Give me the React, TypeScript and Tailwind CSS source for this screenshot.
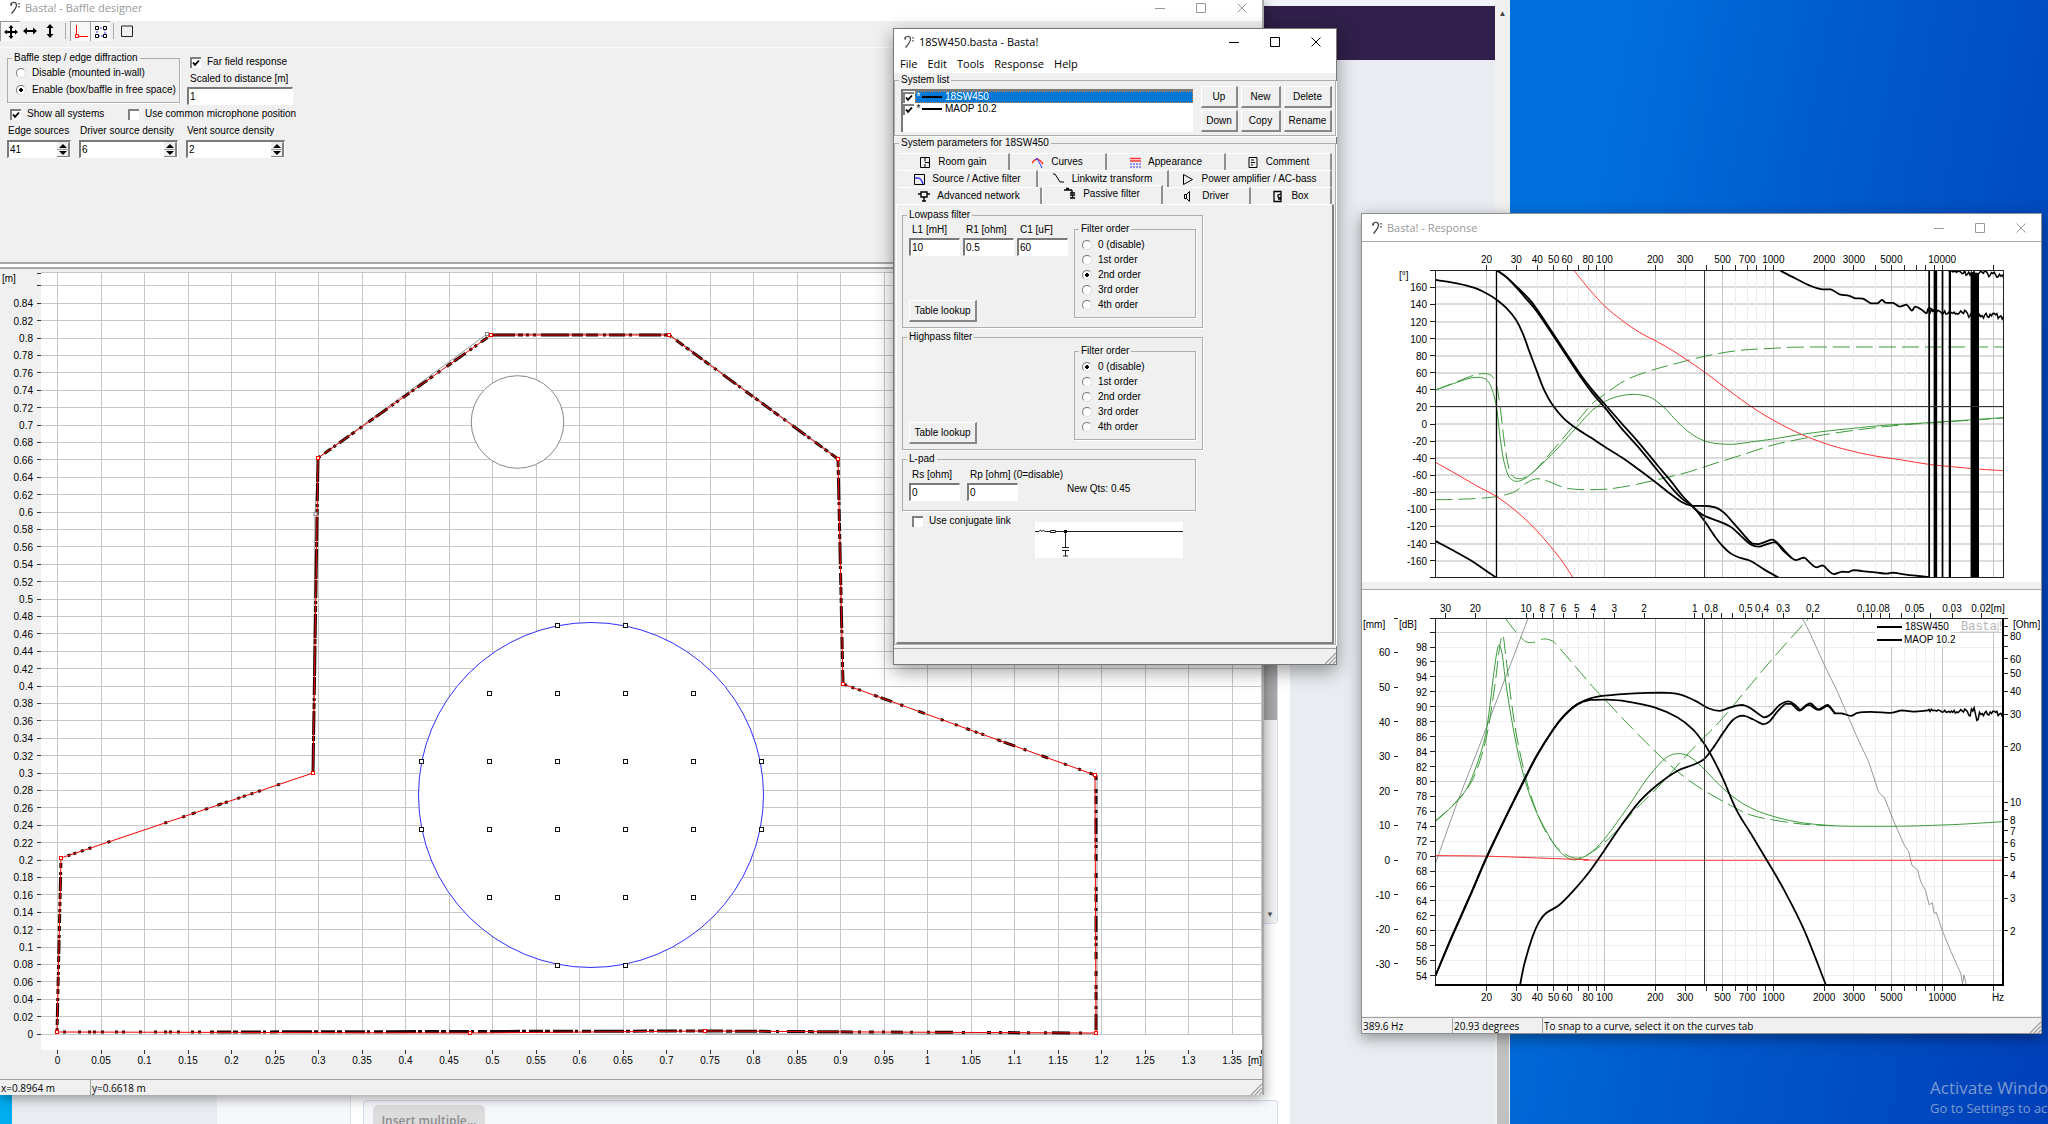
import type { ReactNode } from "react";

type Point = [number, number];

const tiny = "text-[10px] leading-3";

// Catmull-Rom spline through the given points
function curve(flat: number[]) {
  const p: Point[] = [];
  for (let i = 0; i < flat.length; i += 2) p.push([flat[i], flat[i + 1]]);
  let d = `M${p[0][0]} ${p[0][1]}`;
  for (let i = 0; i < p.length - 1; i++) {
    const a = p[i - 1] ?? p[i];
    const b = p[i];
    const c = p[i + 1];
    const e = p[i + 2] ?? c;
    const y = (n: number) => Math.min(Math.max(n, Math.min(b[1], c[1])), Math.max(b[1], c[1]));
    d += `C${b[0] + (c[0] - a[0]) / 6} ${y(b[1] + (c[1] - a[1]) / 6)} ${c[0] - (e[0] - b[0]) / 6} ${y(c[1] - (e[1] - b[1]) / 6)} ${c[0]} ${c[1]}`;
  }
  return d;
}

function noise(x0: number, x1: number, y0: number, y1: number, amp: (x: number) => number) {
  let d = `M${x0} ${y0}`;
  let i = 0;
  for (let x = x0; x <= x1; x += 3) {
    const r = Math.sin(i * 12.9898) * 43758.5453;
    const n = (r - Math.floor(r)) * 2 - 1;
    const t = (x - x0) / (x1 - x0);
    d += `L${x} ${y0 + (y1 - y0) * t + n * amp(x)}`;
    i++;
  }
  return d;
}

function Clef({ className }: { className: string }) {
  return (
    <svg viewBox="0 0 12 14" className={`h-[14px] w-3 shrink-0 ${className}`} fill="none" stroke="currentColor">
      <path d="M1.500 3.500C2.500 .5 7.500 .5 7.500 4C7.500 7.500 4.500 10 2.500 12.500" strokeWidth="1.300" />
      <circle cx="2.200" cy="3.800" r="1" fill="currentColor" stroke="none" />
      <path d="M10 2v1.600M10 5v1.600" strokeWidth="1.400" />
    </svg>
  );
}

function TitleBar({ title, active, className }: { title: string; active?: boolean; className: string }) {
  const tone = active ? "text-black" : "text-[#999]";
  return (
    <header className={`flex items-center bg-white ${className}`}>
      <Clef className={`mr-1 ml-[9px] ${active ? "text-[#555]" : "text-[#444]"}`} />
      <h2 className={`font-['Open_Sans',sans-serif] text-[11px] leading-4 ${tone}`}>{title}</h2>
      <div className={`ml-auto flex ${tone}`}>
        <button type="button" aria-label="Minimize" className="grid w-[41px] place-items-center">
          <svg viewBox="0 0 10 10" className="size-[10px]" stroke="currentColor"><path d="M0 5.500h10" /></svg>
        </button>
        <button type="button" aria-label="Maximize" className="grid w-[41px] place-items-center">
          <svg viewBox="0 0 10 10" className="size-[10px]" stroke="currentColor" fill="none"><path d="M.5.5h9v9h-9z" /></svg>
        </button>
        <button type="button" aria-label="Close" className="grid w-[41px] place-items-center">
          <svg viewBox="0 0 10 10" className="size-[10px]" stroke="currentColor"><path d="M.5.5l9 9M9.500.5l-9 9" /></svg>
        </button>
      </div>
    </header>
  );
}

function Group({ title, className, children }: { title: string; className: string; children?: ReactNode }) {
  return (
    <fieldset className={`min-w-0 border border-[#adadad] shadow-[1px_1px_#fff] ${className}`}>
      <legend className={`ml-1 px-0.5 ${tiny}`}>{title}</legend>
      {children}
    </fieldset>
  );
}

function CheckBox({ checked, label }: { checked?: boolean; label?: string }) {
  return (
    <span className="grid size-[11px] shrink-0 place-items-center">
      <input
        type="checkbox"
        aria-label={label}
        defaultChecked={checked}
        className="peer col-start-1 row-start-1 size-[11px] appearance-none border-t-2 border-l-2 border-[#808080] bg-white"
      />
      <svg viewBox="0 0 8 8" className="pointer-events-none col-start-1 row-start-1 mt-px ml-px hidden size-2 peer-checked:block" fill="none" stroke="#000" strokeWidth="1.800">
        <path d="M1 3.500l2 2.300L7 1.500" />
      </svg>
    </span>
  );
}

function Check({ label, checked, className = "" }: { label: string; checked?: boolean; className?: string }) {
  return (
    <label className={`flex items-center gap-[6px] ${tiny} ${className}`}>
      <CheckBox checked={checked} />
      {label}
    </label>
  );
}

function Radio({ name, label, checked, className }: { name: string; label: string; checked?: boolean; className: string }) {
  return (
    <label className={`flex items-center gap-[6px] ${tiny} ${className}`}>
      <input
        type="radio"
        name={name}
        defaultChecked={checked}
        className="size-[10px] shrink-0 appearance-none rounded-full border border-t-[#777] border-r-[#ddd] border-b-[#ddd] border-l-[#777] bg-white checked:bg-[radial-gradient(circle,#000_0_2px,#fff_2px)]"
      />
      {label}
    </label>
  );
}

function Field({ label, value, className, box }: { label: string; value: string; className: string; box: string }) {
  return (
    <label className={`flex flex-col gap-[2px] whitespace-nowrap ${tiny} ${className}`}>
      <span className="pl-[3px]">{label}</span>
      <input
        defaultValue={value}
        className={`h-[18px] border-t-2 border-r border-b border-l-2 border-t-[#7a7a7a] border-r-white border-b-white border-l-[#7a7a7a] bg-white px-[1px] ${tiny} ${box}`}
      />
    </label>
  );
}

function Spin({ label, value, className }: { label: string; value: string; className: string }) {
  return (
    <div className={`flex flex-col gap-[3px] ${tiny} ${className}`}>
      <label htmlFor={label} className="pl-px whitespace-nowrap">{label}</label>
      <div className="flex h-[18px] border-t-2 border-r border-b border-l-2 border-t-[#7a7a7a] border-r-white border-b-white border-l-[#7a7a7a] bg-white">
        <input id={label} defaultValue={value} className="w-0 grow px-px" />
        <div className="flex w-[13px] flex-col">
          <button type="button" aria-label={`${label} up`} className="grid flex-1 place-items-center border-t border-r-2 border-b border-t-[#e8e8e8] border-r-[#808080] border-b-[#a0a0a0] bg-[#f0f0f0]">
            <svg viewBox="0 0 8 4" className="h-1 w-2"><path d="M0 4L4 0L8 4z" /></svg>
          </button>
          <button type="button" aria-label={`${label} down`} className="grid flex-1 place-items-center border-r-2 border-b border-r-[#808080] border-b-[#808080] bg-[#f0f0f0]">
            <svg viewBox="0 0 8 4" className="h-1 w-2"><path d="M0 0L4 4L8 0z" /></svg>
          </button>
        </div>
      </div>
    </div>
  );
}

function PushButton({ children, className = "" }: { children: ReactNode; className?: string }) {
  return (
    <button
      type="button"
      className={`h-[22px] border-t border-r-2 border-b-2 border-l border-t-white border-r-[#888] border-b-[#888] border-l-white bg-[#f0f0f0] ${tiny} ${className}`}
    >
      {children}
    </button>
  );
}

function Grip() {
  return (
    <svg viewBox="0 0 12 12" className="ml-auto size-3 self-end" stroke="#999" strokeWidth="1.200">
      <path d="M1 12L12 1M5 12l7-7M9 12l3-3" />
    </svg>
  );
}

/* ---------- Baffle designer ---------- */

const bx = (m: number) => 57.5 + m * 870;
const by = (m: number) => 1033 - m * 870;

const edges: { d: string; dash: string }[] = [
  { d: "M57 1031L61 857", dash: "4 3 6 2 14 2 3 4 5 3 9 2 3 3" },
  { d: "M61 857L313 772", dash: "0 7 3 3 3 5 3 5 3 17 3 57 3 16 3 7 4 10 3 10 5 3 3 3" },
  { d: "M313 772L318 457", dash: "30 2 5 1 24 2 6 2 3 3 18 1" },
  { d: "M318 457L491 334", dash: "3 5 8 3 3 4 12 3 4 6 3 8 6 3 14 5 3 3" },
  { d: "M491 334H579", dash: "24 3 5 3 3 4 3 5 28 3" },
  { d: "M579 334H669", dash: "4 3 12 5 3 3 16 4 3 7 22 3" },
  { d: "M669 334L838 458", dash: "3 6 9 3 4 4 12 3 6 6 3 8 16 3" },
  { d: "M838 458L843 683", dash: "8 3 5 3 22 2 3 4 12 2" },
  { d: "M843 683L1095 774", dash: "4 5 3 4 3 14 4 3 12 9 3 16 7 17 3 12 3 9" },
  { d: "M1096 774V1032", dash: "5 9 4 3 8 6 3 5 16 4 4 3 3 6 7 12" },
  { d: "M57 1031L210 1031", dash: "0 6 3 12 3 7 3 2 3 5 3 11 3 4 3 8" },
  { d: "M210 1031L705 1030", dash: "4 3 14 2 5 3 20 2 3 4 9 3 30 2" },
  { d: "M705 1030L870 1031", dash: "18 3 6 3 22 2 12 5 3 8" },
  { d: "M870 1031L1096 1032", dash: "4 8 3 6 12 7 3 14 3 5 18 9 3 22" },
];

const corners: Point[] = [
  [57, 1031], [61, 857], [313, 772], [318, 457], [491, 334], [669, 334],
  [838, 458], [843, 683], [1095, 774], [1096, 1032], [705, 1030], [470, 1032],
];

const sources: Point[] = [
  [557, 624], [625, 624], [557, 964], [625, 964], [421, 760], [421, 828], [761, 760], [761, 828],
  ...[489, 557, 625, 693].flatMap((x) => [692, 760, 828, 896].map((y): Point => [x, y])),
];

function BafflePlot() {
  const rows = Array.from({ length: 44 }, (_, i) => i * 0.02);
  const cols = Array.from({ length: 28 }, (_, i) => i * 0.05);
  return (
    <svg viewBox="0 269 1262 805" className="block w-full" fontSize="10" role="img" aria-label="Baffle outline">
      <rect x="0" y="269" width="1262" height="805" fill="#f0f0f0" />
      <rect x="41" y="271" width="1221" height="778" fill="#fff" />
      <g stroke="#c6c6c6" shapeRendering="crispEdges">
        {rows.map((m) => <path key={m} d={`M41 ${by(m)}H1262`} />)}
        {cols.map((m) => <path key={m} d={`M${bx(m)} 271V1033`} />)}
        <path d="M41 271.500H1262M1261.500 271V1033" />
      </g>
      <g stroke="#333" shapeRendering="crispEdges">
        {rows.map((m) => <path key={m} d={`M37 ${by(m)}h4`} />)}
        {cols.map((m) => <path key={m} d={`M${bx(m)} 1049v4`} />)}
        <path d="M37 272h4M1261.500 1049v4" />
      </g>
      <text x="2" y="281">[m]</text>
      <g textAnchor="end">
        {rows.slice(0, 43).map((m) => (
          <text key={m} x="33" y={by(m) + 4}>{Number(m.toFixed(2))}</text>
        ))}
      </g>
      <g textAnchor="middle">
        {cols.map((m) => (
          <text key={m} x={bx(m)} y="1063">{Number(m.toFixed(2))}</text>
        ))}
        <text x="1255" y="1063">[m]</text>
      </g>
      <circle cx="517.500" cy="421" r="46.300" fill="#fff" stroke="#888" />
      <circle cx="591" cy="794" r="172.500" fill="#fff" stroke="#3030ff" />
      <path d="M318 457L487 333H669L838 457M315 513L318 457M315 513L313 772M1097 775V1033H705" fill="none" stroke="#999" />
      <g stroke="#1c0808" strokeWidth="3">
        {edges.map((e) => <path key={e.d} d={e.d} strokeDasharray={e.dash} />)}
      </g>
      <path d="M57 1031L61 857L313 772L318 457L491 334H669L838 458L843 683L1095 774L1096 1032L870 1031L705 1030L470 1032z" fill="none" stroke="#f00000" />
      <g fill="#fff" stroke="#f00">
        {corners.map(([x, y]) => <rect key={`${x} ${y}`} x={x - 1.5} y={y - 1.5} width="3" height="3" />)}
      </g>
      <g fill="#fff" stroke="#888">
        <rect x="485.500" y="331.500" width="3" height="3" />
        <rect x="314" y="511.500" width="3" height="3" />
      </g>
      <g fill="#fff" stroke="#111">
        {sources.map(([x, y]) => <rect key={`${x} ${y}`} x={x - 1.5} y={y - 1.5} width="4" height="4" />)}
      </g>
    </svg>
  );
}

function ToolButton({ label, on, className = "w-5", children }: { label: string; on?: boolean; className?: string; children: ReactNode }) {
  return (
    <button
      type="button"
      aria-label={label}
      className={`grid h-5 place-items-center ${on ? "border-t border-l border-[#999] bg-[#f8f8f8]" : ""} ${className}`}
    >
      <svg viewBox="0 0 14 14" className="size-[14px]" fill="none" stroke="#000">
        {children}
      </svg>
    </button>
  );
}

function BaffleWindow() {
  return (
    <section className="absolute top-0 left-0 flex w-[1264px] flex-col border-r-2 border-[#a8a8a8] bg-[#f0f0f0] shadow-[0_3px_12px_rgba(0,0,0,0.4)]">
      <TitleBar title="Basta! - Baffle designer" className="h-[21px] pb-[6px]" />
      <div className="flex h-[27px] items-center border-b border-[#fafafa] pb-[6px]">
        <ToolButton label="Move" on>
          <path d="M7 1v12M1 7h12" strokeWidth="2" />
          <path d="M4.500 3L7 0l2.500 3zM4.500 11L7 14l2.500-3zM3 4.500L0 7l3 2.500zM11 4.500L14 7l-3 2.500z" fill="#000" stroke="none" />
        </ToolButton>
        <ToolButton label="Move horizontally">
          <path d="M1 7h12" strokeWidth="2" />
          <path d="M4 3.500L0 7l4 3.500zM10 3.500L14 7l-4 3.500z" fill="#000" stroke="none" />
        </ToolButton>
        <ToolButton label="Move vertically">
          <path d="M7 1v12" strokeWidth="2" />
          <path d="M3.500 4L7 0l3.500 4zM3.500 10L7 14l3.500-4z" fill="#000" stroke="none" />
        </ToolButton>
        <span className="mr-1 ml-[5px] h-4 w-px bg-[#a8a8a8]" />
        <ToolButton label="Show corners" on>
          <path d="M2.500 0v9M4 11.500h10M1.500 9.500h3v3h-3z" stroke="#f00" />
        </ToolButton>
        <ToolButton label="Show sources" on>
          <path d="M3 3h8v8H3z" stroke="#33f" strokeDasharray="2 1" />
          <path d="M1.500 1.500h3v3h-3zM9.500 1.500h3v3h-3zM1.500 9.500h3v3h-3zM9.500 9.500h3v3h-3z" fill="#fff" />
        </ToolButton>
        <span className="mx-[3px] h-4 w-px bg-[#a8a8a8]" />
        <ToolButton label="Rectangle">
          <path d="M1.500 2h11v10.500h-11z" stroke="#222" />
        </ToolButton>
      </div>
      <form className="h-[214px] pl-[7px]">
        <div className="flex pt-1">
          <Group title="Baffle step / edge diffraction" className="h-[51px] w-[173px] pb-1">
            <Radio name="step" label="Disable (mounted in-wall)" className="ml-2 h-[17px]" />
            <Radio name="step" label="Enable (box/baffle in free space)" checked className="ml-2 h-[17px]" />
          </Group>
          <div className="ml-[7px] pt-1">
            <Check label="Far field response" checked className="mb-[5px] ml-[3px]" />
            <Field label="Scaled to distance [m]" value="1" className="w-[106px]" box="w-[106px]" />
          </div>
        </div>
        <div className="mt-[3px] flex">
          <Check label="Show all systems" checked className="ml-[3px] w-[118px]" />
          <Check label="Use common microphone position" />
        </div>
        <div className="mt-[5px] flex gap-2">
          <Spin label="Edge sources" value="41" className="w-[64px]" />
          <Spin label="Driver source density" value="6" className="w-[99px]" />
          <Spin label="Vent source density" value="2" className="w-[99px]" />
        </div>
      </form>
      <div className="mb-px h-[7px] border-y-2 border-[#a8a8a8] bg-white" />
      <BafflePlot />
      <footer className="mt-1 flex h-4 border-t border-[#a0a0a0] font-['Open_Sans',sans-serif] text-[10px] leading-4">
        <span className="w-[90px] pl-px">x=0.8964 m</span>
        <span className="border-l border-[#a0a0a0] pl-px">y=0.6618 m</span>
        <Grip />
      </footer>
    </section>
  );
}

/* ---------- Main window ---------- */

const tabRows = [
  [
    { label: "Room gain", icon: <path d="M1.500 1.500h9v10h-9zM6 1.500v4M6 8v3.500M6 6.500h4.500" />, className: "w-[112px]" },
    { label: "Curves", icon: <><path d="M0 7Q5-1 11 8" stroke="#f33" strokeWidth="1.500" /><path d="M3 4l2-2 5 10" stroke="#33f" /></>, className: "w-[97px]" },
    { label: "Appearance", icon: <><path d="M1 2.500h11M1 5h11" stroke="#f33" strokeWidth="1.500" /><path d="M1 8h11M1 11h11" stroke="#33f" strokeDasharray="2 1" /></>, className: "w-[119px]" },
    { label: "Comment", icon: <path d="M2 1.500h8v10H2zM4 4h3M4 6.500h4M4 9h2" />, className: "w-[106px]" },
  ],
  [
    { label: "Source / Active filter", icon: <><path d="M1.500 1.500h10v10h-10z" /><path d="M2 5h3q3 0 5 6" stroke="#33f" strokeWidth="1.500" /></>, className: "w-[140px]" },
    { label: "Linkwitz transform", icon: <path d="M0 1h2l5 8h4" />, className: "w-[131px]" },
    { label: "Power amplifier / AC-bass", icon: <path d="M1.500 1.500v10l9-5z" />, className: "w-[163px]" },
  ],
  [
    { label: "Advanced network", icon: <path d="M3 2h6v5H3zM0 4h3M9 4h3M6 7v4M4 11h4" strokeWidth="1.400" />, className: "w-[144px]" },
    { label: "Passive filter", icon: <path d="M0 3h8M2 1.500h3M8 3v3M6 6h5M8.500 8v3M6 8h5M6 11h5" strokeWidth="1.400" />, className: "w-[121px]", active: true },
    { label: "Driver", icon: <path d="M1.500 4.500h2v4h-2zM3.500 4.500l3-3v10l-3-3" />, className: "w-[88px]" },
    { label: "Box", icon: <path d="M2 1.500h7v10H2zM9 4L6 5v2l3 1M6 9h3" strokeWidth="1.300" />, className: "w-[81px]" },
  ],
];

function FilterBox({ title, name, selected, children }: { title: string; name: string; selected: number; children?: ReactNode }) {
  return (
    <Group title={title} className="h-[119px] w-[301px]">
      <div className="flex h-[101px] justify-between px-[6px]">
        <div className="flex flex-col justify-between pt-[3px]">
          <div className="flex gap-[3px]">{children}</div>
          <PushButton className="w-[68px]">Table lookup</PushButton>
        </div>
        <Group title="Filter order" className="mt-[2px] h-[95px] w-[122px] pt-[2px]">
          {["0 (disable)", "1st order", "2nd order", "3rd order", "4th order"].map((o, i) => (
            <Radio key={o} name={name} label={o} checked={i === selected} className="ml-[7px] h-[15px]" />
          ))}
        </Group>
      </div>
    </Group>
  );
}

function MainWindow() {
  return (
    <section className="absolute top-[28px] left-[893px] flex w-[444px] flex-col border border-[#777] bg-[#f0f0f0] shadow-[0_6px_18px_rgba(0,0,0,0.4)]">
      <TitleBar title="18SW450.basta - Basta!" active className="h-[25px]" />
      <nav className="flex h-[19px] items-center gap-[10px] bg-white pl-[6px] font-['Open_Sans',sans-serif] text-[11px] leading-4">
        {["File", "Edit", "Tools", "Response", "Help"].map((m) => (
          <button key={m} type="button">{m}</button>
        ))}
      </nav>
      <Group title="System list" className="mt-px h-[62px]">
        <div className="flex pl-[6px]">
          <ul className="mt-[3px] h-[43px] w-[292px] border-t-2 border-l-2 border-[#7a7a7a] bg-white">
            {["18SW450", "MAOP 10.2"].map((s, i) => (
              <li key={s} className="flex h-3 items-center gap-px">
                <CheckBox label={s} checked />
                <span className={`flex h-3 grow items-center whitespace-nowrap ${tiny} ${i === 0 ? "bg-[#0078d7] text-white outline-1 -outline-offset-1 outline-dotted outline-[#d08040]" : ""}`}>
                  <span className="w-[7px] text-center">*</span>
                  <span className="mr-[3px] h-0.5 w-5 bg-black" />
                  {s}
                </span>
              </li>
            ))}
          </ul>
          <div className="ml-2 grid grid-cols-[37px_40px_48px] content-start gap-x-[3px] gap-y-[2px]">
            {["Up", "New", "Delete", "Down", "Copy", "Rename"].map((b) => <PushButton key={b}>{b}</PushButton>)}
          </div>
        </div>
      </Group>
      <Group title="System parameters for 18SW450" className="mt-px h-[508px]">
        <div role="tablist" className="mt-1 ml-[3px]">
          {tabRows.map((row, r) => (
            <div key={r} className="flex h-[17px]">
              {row.map((t) => (
                <button
                  key={t.label}
                  type="button"
                  role="tab"
                  aria-selected={"active" in t}
                  className={`flex items-center justify-center gap-[6px] border-t border-r-2 border-t-white border-r-[#909090] bg-[#f0f0f0] whitespace-nowrap ${tiny} ${t.className} ${"active" in t ? "-mt-0.5 h-[19px] border-l border-l-white pb-[3px]" : ""}`}
                >
                  <svg viewBox="0 0 13 13" className="size-[13px]" fill="none" stroke="#000">{t.icon}</svg>
                  {t.label}
                </button>
              ))}
            </div>
          ))}
        </div>
        <form className="mx-px h-[440px] border-t border-r-2 border-b-2 border-l border-t-white border-r-[#808080] border-b-[#808080] border-l-white pt-1 pl-[5px]">
          <FilterBox title="Lowpass filter" name="lp" selected={2}>
            <Field label="L1 [mH]" value="10" className="w-[51px]" box="w-[51px]" />
            <Field label="R1 [ohm]" value="0.5" className="w-[51px]" box="w-[51px]" />
            <Field label="C1 [uF]" value="60" className="w-[51px]" box="w-[51px]" />
          </FilterBox>
          <div className="mt-[3px]">
            <FilterBox title="Highpass filter" name="hp" selected={0} />
          </div>
          <Group title="L-pad" className="mt-[3px] h-[58px] w-[294px]">
            <div className="flex pt-1 pl-[6px]">
              <Field label="Rs [ohm]" value="0" className="w-[58px]" box="w-[51px]" />
              <Field label="Rp [ohm] (0=disable)" value="0" className="w-[100px]" box="w-[51px]" />
              <output className={`mt-[14px] ${tiny}`}>New Qts: 0.45</output>
            </div>
          </Group>
          <div className="flex items-start pt-1 pl-[10px]">
            <Check label="Use conjugate link" className="w-[123px]" />
            <svg viewBox="0 0 148 36" className="mt-[7px] h-9 w-[148px] bg-white" fill="none" stroke="#222">
              <path d="M0 9.500h4q1-3 3 0q1-3 3 0h5M21 9.500h127M30.500 9.500V25M27 25.500h7M27 28.500h7M30.500 29v5M28 34h5" />
              <path d="M15.500 8.500h5v2h-5z" />
              <path d="M29 8h3v3h-3z" fill="#000" stroke="none" />
            </svg>
          </div>
        </form>
      </Group>
      <footer className="mt-[3px] flex h-4 border-t border-[#a0a0a0]">
        <Grip />
      </footer>
    </section>
  );
}

/* ---------- Response window ---------- */

const fx = (hz: number) => 1604.5 + 168.85 * Math.log10(hz / 100);

const freqs = [1, 10, 100, 1000].flatMap((k) => [2, 3, 4, 5, 6, 7, 8, 9, 10].map((n) => n * 10 * k)).filter((f) => f <= 20000);
const majorFreqs = [20, 50, 100, 200, 500, 1000, 2000, 5000, 10000, 20000];
const freqLabels = [20, 30, 40, 50, 60, 80, 100, 200, 300, 500, 700, 1000, 2000, 3000, 5000, 10000];
const waveLabels = [30, 20, 10, 8, 7, 6, 5, 4, 3, 2, 1, 0.8, 0.5, 0.4, 0.3, 0.2, 0.1, 0.08, 0.05, 0.03];
const waveTicks = [30, 20, 10, 9, 8, 7, 6, 5, 4, 3, 2, 1, 0.9, 0.8, 0.7, 0.6, 0.5, 0.4, 0.3, 0.2, 0.1, 0.09, 0.08, 0.07, 0.06, 0.05, 0.04, 0.03, 0.02];

const phase = {
  black: [
    [192, 210, 240, 220, 280, 234, 310, 253, 330, 270, 352, 295, 372, 328, 388, 370, 403, 425, 420, 485, 437, 543, 455, 585, 480, 625, 508, 655, 540, 682, 572, 710, 610, 742, 650, 780, 685, 815, 720, 852, 745, 876, 766, 887, 800, 888, 822, 893, 840, 908, 862, 940, 885, 975, 903, 1000, 918, 1002, 932, 996, 948, 989, 958, 996, 975, 1020, 993, 1045, 1003, 1050, 1020, 1043, 1033, 1058, 1047, 1072, 1062, 1066, 1075, 1082, 1087, 1092, 1105, 1085, 1120, 1086, 1132, 1080, 1150, 1083, 1180, 1087, 1205, 1091, 1220, 1088, 1245, 1093, 1270, 1097, 1300, 1101],
    [330, 181, 350, 200, 372, 230, 395, 265, 420, 305, 457, 378, 490, 445, 520, 505, 545, 550, 572, 592, 610, 655, 650, 715, 690, 780, 720, 830, 745, 865, 768, 887, 782, 905, 800, 920, 840, 940, 860, 955, 880, 980, 900, 1003, 918, 1010, 935, 1003, 955, 996, 972, 1020, 993, 1045],
    [330, 181, 350, 200, 372, 227, 402, 267, 420, 298, 457, 372, 490, 439, 520, 498, 545, 541, 572, 582, 610, 640, 650, 700, 690, 765, 720, 812, 745, 855, 768, 887, 782, 908, 800, 940, 820, 980, 835, 1005, 855, 1030, 875, 1043, 900, 1053, 930, 1078, 963, 1103],
    [192, 993, 230, 1020, 270, 1050, 300, 1077, 329, 1103],
    [965, 181, 1000, 205, 1035, 228, 1060, 238, 1080, 238, 1100, 253, 1120, 257, 1135, 265, 1152, 266, 1170, 280, 1185, 280, 1195, 270, 1203, 278, 1220, 279, 1235, 290, 1250, 284, 1262, 302, 1270, 290, 1285, 300, 1295, 310, 1300, 294, 1312, 302],
  ],
  red: [
    [503, 181, 525, 218, 550, 257, 575, 292, 610, 330, 650, 367, 690, 395, 725, 422, 757, 450, 795, 485, 840, 530, 880, 570, 915, 602, 950, 630, 990, 658, 1030, 682, 1080, 706, 1130, 724, 1180, 738, 1240, 750, 1300, 763, 1360, 771, 1410, 777, 1468, 782],
    [192, 757, 240, 793, 285, 828, 330, 860, 370, 900, 405, 942, 435, 985, 460, 1025, 480, 1060, 500, 1101],
  ],
  green: [
    [192, 540, 230, 522, 265, 506, 285, 502, 300, 504, 312, 518, 322, 550, 330, 600, 337, 680, 345, 750, 355, 795, 365, 810, 376, 814, 395, 804, 425, 770, 457, 728, 490, 680, 520, 635, 545, 600, 572, 575, 600, 560, 635, 553, 665, 558, 685, 570, 710, 598, 735, 635, 765, 670, 795, 692, 825, 701, 860, 703, 900, 696, 950, 687, 1000, 676, 1060, 665, 1130, 655, 1200, 646, 1300, 638, 1468, 623],
  ],
  dashed: [
    [192, 540, 240, 515, 280, 495, 305, 491, 320, 500, 330, 530, 338, 600, 347, 700, 357, 775, 368, 802, 385, 806, 410, 788, 440, 745, 475, 690, 510, 635, 545, 580, 572, 553, 620, 510, 680, 480, 740, 458, 800, 438, 870, 422, 950, 415, 1050, 411, 1468, 411],
    [192, 869, 240, 868, 300, 864, 340, 857, 370, 845, 395, 820, 420, 806, 445, 814, 485, 834, 530, 839, 580, 837, 640, 824, 700, 806, 760, 786, 820, 760, 880, 735, 950, 705, 1020, 685, 1100, 667, 1200, 650, 1300, 639, 1468, 624],
  ],
};

const spl = {
  black: [
    [192, 1187, 230, 1065, 270, 945, 307, 830, 350, 710, 390, 602, 420, 525, 457, 447, 480, 408, 510, 373, 540, 355, 572, 347, 640, 340, 700, 338, 740, 343, 775, 362, 805, 385, 830, 393, 855, 382, 880, 375, 900, 385, 930, 412, 945, 403, 965, 375, 985, 364, 1000, 375, 1012, 389, 1025, 375, 1035, 370, 1052, 388, 1073, 375, 1090, 400, 1105, 400, 1125, 408, 1140, 399, 1170, 396, 1215, 399, 1240, 391, 1265, 395, 1300, 391],
    [192, 1187, 230, 1068, 270, 948, 307, 833, 350, 712, 390, 605, 420, 527, 457, 448, 480, 409, 510, 374, 540, 360, 572, 359, 620, 364, 684, 382, 735, 412, 770, 448, 795, 490, 815, 535, 838, 597, 868, 690, 900, 760, 935, 838, 975, 930, 1020, 1050, 1069, 1215],
    [382, 1215, 392, 1150, 410, 1070, 425, 1025, 440, 1000, 470, 975, 500, 935, 535, 880, 572, 810, 610, 735, 650, 665, 690, 615, 735, 573, 770, 555, 795, 538, 815, 505, 840, 455, 860, 420, 882, 407, 905, 418, 928, 433, 942, 425, 960, 395, 978, 372, 992, 372, 1010, 392, 1030, 375, 1052, 390, 1073, 378, 1090, 402],
  ],
  red: [[192, 827, 285, 828, 360, 831, 440, 835, 530, 839, 615, 841, 1468, 841]],
  green: [
    [192, 722, 240, 665, 270, 605, 300, 490, 312, 400, 322, 290, 330, 215, 335, 195, 342, 225, 350, 310, 362, 410, 376, 510, 395, 610, 420, 700, 457, 790, 480, 825, 503, 840, 530, 828, 560, 795, 590, 745, 630, 670, 665, 600, 700, 545, 720, 526, 738, 521, 760, 528, 790, 560, 830, 615, 870, 660, 910, 690, 950, 709, 1000, 725, 1060, 735, 1130, 739, 1220, 739, 1290, 737, 1370, 733, 1468, 725],
  ],
  dashed: [
    [192, 725, 235, 670, 275, 600, 305, 480, 325, 320, 335, 210, 343, 165, 350, 230, 362, 360, 376, 480, 400, 620, 430, 730, 457, 790, 480, 820, 510, 835, 545, 815, 590, 765, 640, 690, 700, 610, 760, 520, 830, 425, 890, 330, 950, 235, 1029, 117],
    [350, 117, 375, 160, 395, 185, 410, 188, 435, 177, 455, 183, 500, 250, 545, 320, 572, 358, 630, 440, 690, 520, 750, 590, 800, 635, 860, 680, 900, 705, 950, 720, 1020, 733, 1100, 738],
  ],
};

function Curves({ data }: { data: typeof phase }) {
  return (
    <g fill="none">
      <g stroke="#3a9a3a">
        {data.green.map((c, i) => <path key={i} d={curve(c)} vectorEffect="non-scaling-stroke" />)}
        {data.dashed.map((c, i) => <path key={i} d={curve(c)} strokeDasharray="17 6" vectorEffect="non-scaling-stroke" />)}
      </g>
      <g stroke="#ff3030">
        {data.red.map((c, i) => <path key={i} d={curve(c)} vectorEffect="non-scaling-stroke" />)}
      </g>
      <g stroke="#000" strokeWidth="1.800">
        {data.black.map((c, i) => <path key={i} d={curve(c)} vectorEffect="non-scaling-stroke" />)}
      </g>
    </g>
  );
}

function FreqGrid({ top, bottom }: { top: number; bottom: number }) {
  return (
    <g shapeRendering="crispEdges">
      {freqs.map((f) => (
        <path key={f} d={`M${fx(f)} ${top}V${bottom}`} stroke={majorFreqs.includes(f) ? "#c4c4c4" : "#ededed"} />
      ))}
    </g>
  );
}

function PhaseChart() {
  const degrees = Array.from({ length: 17 }, (_, i) => 160 - i * 20);
  const dy = (deg: number) => 424 - deg * 0.854;
  return (
    <svg viewBox="1362 242 679 340" className="block w-full bg-white" fontSize="10" role="img" aria-label="Phase response">
      <g stroke="#dcdcdc" strokeWidth="2" shapeRendering="crispEdges">
        {degrees.map((d) => <path key={d} d={`M1435 ${dy(d)}H2003`} />)}
      </g>
      <FreqGrid top={270} bottom={578} />
      <svg x="1435.500" y="270.300" width="568" height="307.400" viewBox="192 181 1276 922" preserveAspectRatio="none">
        <Curves data={phase} />
        <g fill="none" stroke="#000" strokeWidth="1.500">
          <path d={noise(1300, 1468, 303, 320, (x) => (x > 1365 ? 10 : 6))} vectorEffect="non-scaling-stroke" />
          <path d={noise(1345, 1468, 184, 194, (x) => (x > 1380 ? 9 : 5))} vectorEffect="non-scaling-stroke" />
        </g>
        <path d="M327.500 181h3v922h-3zM1299 181h4v922h-4zM1311 181h8v922h-8zM1329 181h4v922h-4zM1345 181h5v922h-5zM1394 190h19v913h-19z" />
      </svg>
      <g shapeRendering="crispEdges" stroke="#222" fill="none">
        <path d="M1704 270V578M1435 406.500H2003" stroke="#333" />
        <path d="M1435.500 270.500H2003.500V577.500H1435.500z" strokeWidth="1" />
        {freqs.map((f) => <path key={f} d={`M${fx(f)} 265v5`} />)}
        {[180, ...degrees, -180].map((d) => <path key={d} d={`M1430 ${dy(d)}h5`} />)}
      </g>
      <text x="1399" y="279">[°]</text>
      <g textAnchor="middle">
        {freqLabels.map((f) => <text key={f} x={fx(f)} y="263">{f}</text>)}
      </g>
      <g textAnchor="end">
        {degrees.map((d) => <text key={d} x="1427" y={dy(d) + 4}>{d}</text>)}
      </g>
    </svg>
  );
}

function SplChart() {
  const levels = Array.from({ length: 23 }, (_, i) => 98 - i * 2);
  const ly = (db: number) => 647 + (98 - db) * 7.47;
  const oy = (ohm: number) => 802 - 184 * Math.log10(ohm / 10);
  return (
    <svg viewBox="1362 590 679 426" className="block w-full bg-white" fontSize="10" role="img" aria-label="Sound pressure, excursion and impedance">
      <g shapeRendering="crispEdges">
        {levels.map((d) => <path key={d} d={`M1435 ${ly(d)}H2003`} stroke="#efefef" strokeWidth="1" />)}
        <path d={`M1435 ${ly(100)}H2003M1435 ${ly(90)}H2003M1435 ${ly(80)}H2003M1435 ${ly(70)}H2003M1435 ${ly(60)}H2003`} stroke="#cfcfcf" />
      </g>
      <FreqGrid top={618} bottom={985} />
      <svg x="1435.500" y="618.300" width="568" height="367.300" viewBox="192 115 1276 1102" preserveAspectRatio="none">
        <g fill="none" stroke="#999">
          <path d="M192 850L240 670L290 500L350 290L400 115" vectorEffect="non-scaling-stroke" />
          <path d="M1016 115L1030 150L1068 262L1095 335L1140 475L1165 545L1188 638L1200 652L1225 735L1245 795L1255 815L1262 855L1275 870L1282 905L1293 932L1301 975L1308 968L1312 1000L1317 998L1330 1050L1350 1115L1365 1160L1372 1180L1376 1212L1379 1185L1385 1217" vectorEffect="non-scaling-stroke" />
        </g>
        <Curves data={spl} />
        <g fill="none" stroke="#000" strokeWidth="1.500">
          <path d={noise(1300, 1468, 391, 402, (x) => (x > 1390 && x < 1415 ? 24 : x > 1350 ? 9 : 4))} vectorEffect="non-scaling-stroke" />
        </g>
      </svg>
      <g shapeRendering="crispEdges" stroke="#222" fill="none">
        <path d="M1704 618V985" stroke="#333" />
        <path d="M1435.500 985V618.500H2003" />
        <path d="M1435 985H2003V618" stroke="#000" strokeWidth="2" />
        {freqs.map((f) => <path key={f} d={`M${fx(f)} 986v5`} />)}
        {waveTicks.map((w) => <path key={w} d={`M${fx(343 / w)} 613v5`} />)}
        {[100, ...levels].map((d) => <path key={d} d={`M1430 ${ly(d)}h5`} />)}
        {[60, 50, 40, 30, 20, 10, 0, -10, -20, -30].map((m) => <path key={m} d={`M1394 ${860 - m * 3.46}h4`} />)}
        {[90, 80, 70, 60, 50, 40, 30, 20, 10, 9, 8, 7, 6, 5, 4, 3, 2].map((o) => <path key={o} d={`M2004 ${oy(o)}h4`} />)}
        <path d="M1394 618.500h4M1430 618.500h5M2004 618.500h4" />
      </g>
      <rect x="1875" y="620" width="76" height="27" fill="#fff" />
      <rect x="1959" y="620" width="40" height="12" fill="#fff" />
      <path d="M1877 627H1902M1877 640H1902" stroke="#000" strokeWidth="2" />
      <text x="1905" y="630">18SW450</text>
      <text x="1904" y="643">MAOP 10.2</text>
      <text x="1961" y="630" fontSize="12" fontFamily="Liberation Mono, monospace" textAnchor="start" fill="#b4b4b4">Basta!</text>
      <path d="M1960 632H1998V622" fill="none" stroke="#c8c8c8" />
      <text x="1363" y="628">[mm]</text>
      <text x="1399" y="628">[dB]</text>
      <text x="2013" y="628">[Ohm]</text>
      <g textAnchor="middle">
        {freqLabels.map((f) => <text key={f} x={fx(f)} y="1001">{f}</text>)}
        <text x="1998" y="1001">Hz</text>
        {waveLabels.map((w) => <text key={w} x={fx(343 / w)} y="612">{w}</text>)}
        <text x="1988" y="612">0.02[m]</text>
      </g>
      <g textAnchor="end">
        {levels.map((d) => <text key={d} x="1427" y={ly(d) + 4}>{d}</text>)}
        {[60, 50, 40, 30, 20, 10, 0, -10, -20, -30].map((m) => <text key={m} x="1390" y={864 - m * 3.46}>{m}</text>)}
      </g>
      {[80, 60, 50, 40, 30, 20, 10, 8, 7, 6, 5, 4, 3, 2].map((o) => <text key={o} x="2010" y={oy(o) + 4}>{o}</text>)}
    </svg>
  );
}

function ResponseWindow() {
  return (
    <section className="absolute top-[213px] left-[1361px] flex w-[681px] flex-col border border-[#909090] bg-[#f0f0f0] shadow-[0_4px_14px_rgba(0,0,0,0.4)]">
      <TitleBar title="Basta! - Response" className="h-[28px] border-b border-[#a8a8a8]" />
      <PhaseChart />
      <div className="h-2 border-b border-[#a8a8a8]" />
      <SplChart />
      <footer className="mt-px flex h-4 border-t border-[#a0a0a0] font-['Open_Sans',sans-serif] text-[10px] leading-4">
        <span className="w-[90px] pl-px">389.6 Hz</span>
        <span className="w-[90px] border-l border-[#a0a0a0] pl-px">20.93 degrees</span>
        <span className="border-l border-[#a0a0a0] pl-px">To snap to a curve, select it on the curves tab</span>
        <Grip />
      </footer>
    </section>
  );
}

/* ---------- Desktop ---------- */

function BrowserPage() {
  return (
    <div className="flex min-h-screen w-[1510px] bg-white">
      <div className="w-3 bg-[#00adef]" />
      <div className="flex grow flex-col">
        <div className="h-[6px] bg-[#f0f4f8]" />
        <div className="h-[54px] bg-[#2f1f4a]" />
        <div className="flex grow">
          <div className="w-[205px] bg-[#e9ecf1]" />
          <div className="w-[134px] border-r border-[#dde3ee] bg-[#f7f8fc]" />
          <div className="flex grow flex-col justify-between pl-3">
            <div className="mr-3 flex h-[864px] justify-end rounded-br border-r border-b border-[#d5dded]">
              <div className="flex w-[14px] flex-col items-center bg-[#f1f1f1]">
                <div className="h-[660px] w-full bg-[#a8a8a8]" />
                <span className="mt-auto mb-0.5 text-[8px] leading-3 text-[#555]">▼</span>
              </div>
            </div>
            <div className="mr-3 h-6 rounded-t border border-b-0 border-[#d5dded] bg-[#f7f8fc] pt-1 pl-[9px]">
              <button type="button" className="h-[19px] w-[112px] rounded-t-md bg-[#dcdcdc] pt-1 text-center font-['Open_Sans',sans-serif] text-[12px] leading-6 font-semibold text-[#8c8c8c]">
                Insert multiple...
              </button>
            </div>
          </div>
          <div className="w-[205px] bg-[#e9ecf1]" />
        </div>
      </div>
      <div className="flex w-[15px] flex-col items-center bg-[#f1f1f1]">
        <span className="mt-2 text-[8px] leading-3 text-[#444]">▲</span>
        <div className="mt-auto h-[100px] w-3 bg-[#c1c1c1]" />
      </div>
    </div>
  );
}

export default function App() {
  return (
    <main className="relative min-h-screen w-full overflow-hidden bg-[linear-gradient(100deg,#006fdc_72%,#0055c8_86%,#003fb8_100%)] font-['Liberation_Sans',Arial,sans-serif] text-black">
      <BrowserPage />
      <BaffleWindow />
      <ResponseWindow />
      <MainWindow />
      <aside className="absolute right-0 bottom-2 w-[118px] overflow-hidden font-['Open_Sans',sans-serif] whitespace-nowrap text-[#7b9bd0]">
        <p className="text-[17px] leading-6">Activate Windows</p>
        <p className="text-[13px] leading-4">Go to Settings to activate Windows.</p>
      </aside>
    </main>
  );
}
